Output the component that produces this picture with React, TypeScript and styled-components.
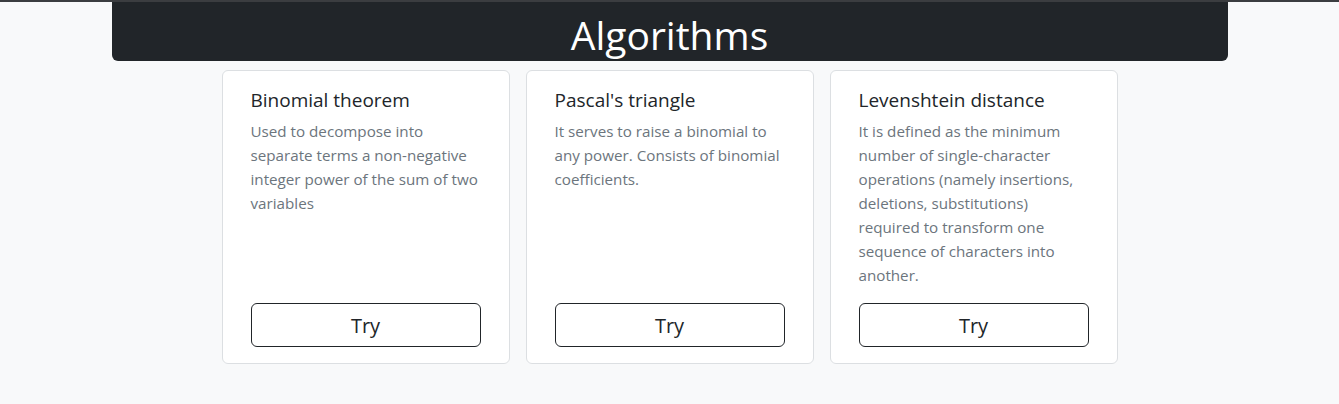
import styled, { createGlobalStyle } from "styled-components";

const GlobalStyle = createGlobalStyle`
  html, body {
    margin: 0;
    padding: 0;
    background: #f8f9fa;
  }
  body {
    font-family: "Open Sans", "Noto Sans", sans-serif;
    color: #212529;
    border-top: 2px solid #3b3d40;
  }
`;

const Page = styled.div`
  display: flex;
  flex-direction: column;
  align-items: center;
  gap: 9px;
`;

const Header = styled.header`
  width: 1116px;
  height: 59px;
  background: #212529;
  border-radius: 0 0 6px 6px;
  display: flex;
  align-items: center;
  justify-content: center;
`;

const Title = styled.h1`
  margin: 0;
  color: #fff;
  font-size: 39px;
  font-weight: 400;
  line-height: 1;
  padding-top: 5px;
`;

const CardRow = styled.div`
  display: grid;
  grid-template-columns: repeat(3, 288px);
  gap: 16px;
`;

const Card = styled.div`
  height: 294px;
  box-sizing: border-box;
  background: #fff;
  border: 1px solid #dcdfe2;
  border-radius: 6px;
  padding: 16px 28px 16px;
  display: flex;
  flex-direction: column;
`;

const CardTitle = styled.h5`
  margin: 0 0 6px;
  font-size: 19px;
  font-weight: 400;
  line-height: 26px;
  color: #212529;
`;

const CardText = styled.p`
  margin: 0;
  font-size: 15.2px;
  line-height: 24px;
  color: #6c757d;
  flex: 1;
`;

const TryButton = styled.button`
  height: 44px;
  width: 100%;
  background: #fff;
  border: 1px solid #212529;
  border-radius: 6px;
  font-family: inherit;
  font-size: 20px;
  color: #212529;
  cursor: pointer;
`;

const algorithms = [
  {
    name: "Binomial theorem",
    text: "Used to decompose into separate terms a non-negative integer power of the sum of two variables",
  },
  {
    name: "Pascal's triangle",
    text: "It serves to raise a binomial to any power. Consists of binomial coefficients.",
  },
  {
    name: "Levenshtein distance",
    text: "It is defined as the minimum number of single-character operations (namely insertions, deletions, substitutions) required to transform one sequence of characters into another.",
  },
];

export default function App() {
  return (
    <>
      <GlobalStyle />
      <Page>
        <Header>
          <Title>Algorithms</Title>
        </Header>
        <CardRow>
          {algorithms.map((a) => (
            <Card key={a.name}>
              <CardTitle>{a.name}</CardTitle>
              <CardText>{a.text}</CardText>
              <TryButton>Try</TryButton>
            </Card>
          ))}
        </CardRow>
      </Page>
    </>
  );
}
